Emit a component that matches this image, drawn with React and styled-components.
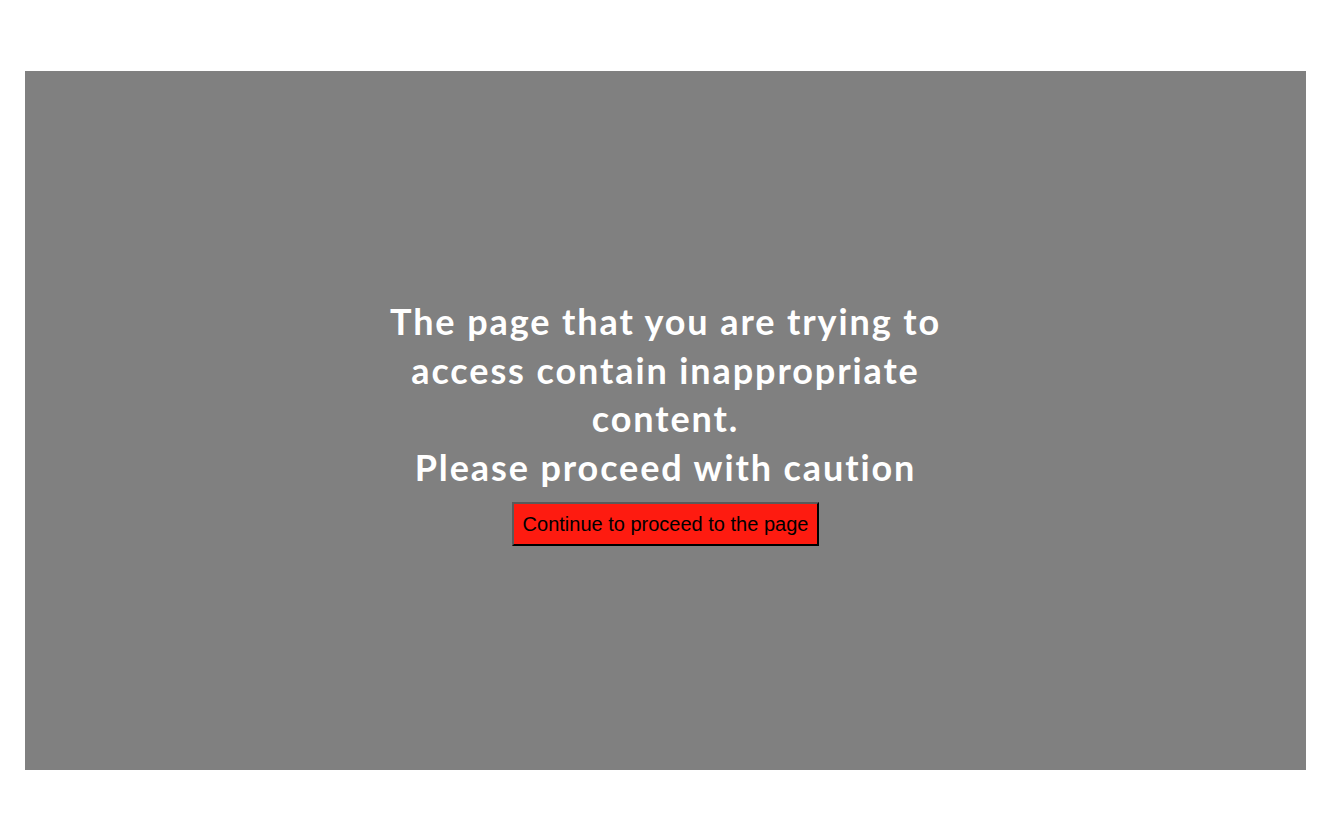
import React from 'react';
import styled, { createGlobalStyle } from 'styled-components';

const GlobalStyle = createGlobalStyle`
  html, body {
    margin: 0;
    padding: 0;
    background: #ffffff;
  }
`;

const Page = styled.div`
  padding: 71px 36px 47px 25px;
`;

const Overlay = styled.div`
  height: 699px;
  background: #808080;
  display: flex;
  flex-direction: column;
  align-items: center;
  justify-content: center;
  padding-top: 2px;
  box-sizing: border-box;
`;

const Message = styled.h1`
  margin: 0 0 11px;
  color: #ffffff;
  font-family: "Segoe UI", Lato, "Open Sans", sans-serif;
  font-weight: 700;
  font-size: 36px;
  line-height: 48.5px;
  letter-spacing: 1.9px;
  font-variant-ligatures: none;
  text-align: center;
`;

const Line = styled.span`
  display: block;
  white-space: nowrap;
`;

const ProceedButton = styled.button`
  height: 44px;
  padding: 0 9px;
  background: #fe1b10;
  color: #000000;
  font-family: "Liberation Sans", Arial, sans-serif;
  font-size: 20px;
  border-style: solid;
  border-width: 2px;
  border-color: #5a5a5a #000000 #000000 #5a5a5a;
  cursor: pointer;
`;

export default function App() {
  return (
    <>
      <GlobalStyle />
      <Page>
        <Overlay>
          <Message>
            <Line>The page that you are trying to</Line>
            <Line>access contain inappropriate</Line>
            <Line>content.</Line>
            <Line>Please proceed with caution</Line>
          </Message>
          <ProceedButton>Continue to proceed to the page</ProceedButton>
        </Overlay>
      </Page>
    </>
  );
}
